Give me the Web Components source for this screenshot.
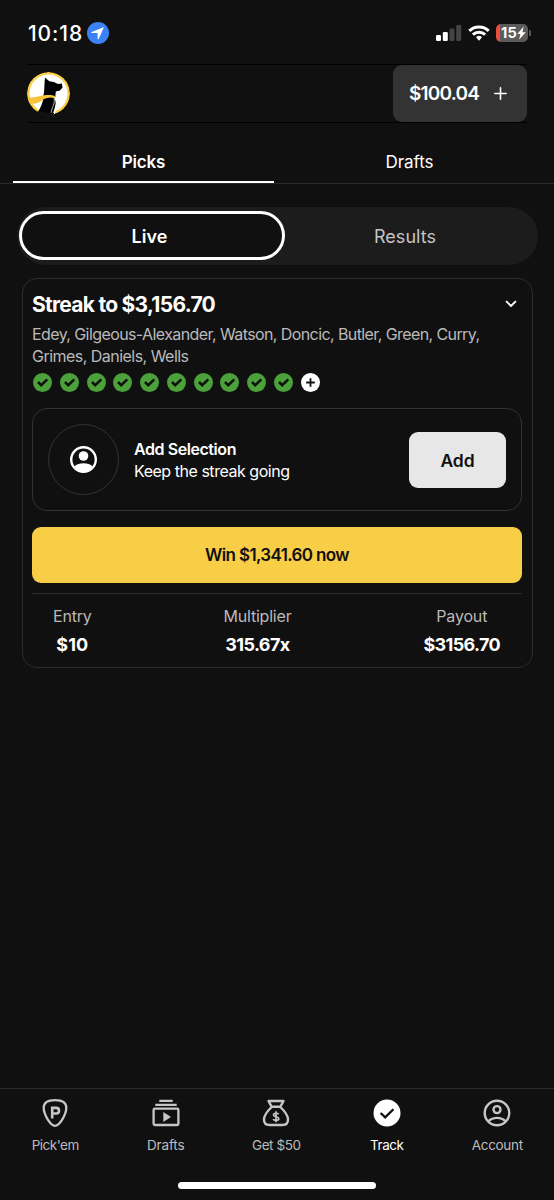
<!DOCTYPE html>
<html lang="en">
<head>
<meta charset="utf-8">
<title>Track picks</title>
<style>
html,body{margin:0;height:100%;background:#101010}
body{font-family:Inter,"Liberation Sans",sans-serif;color:#fff;overflow:hidden}
</style>
</head>
<body>
<track-app></track-app>
<script>
const define=(name,css,html,init)=>{
  const tpl=document.createElement('template');
  tpl.innerHTML=`<style>*{box-sizing:border-box}svg{display:block}${css}</style>${html}`;
  customElements.define(name,class extends HTMLElement{
    connectedCallback(){
      if(this.shadowRoot)return;
      this.attachShadow({mode:'open'}).appendChild(tpl.content.cloneNode(true));
      if(init)init(this,this.shadowRoot);
    }
  });
};

/* The whole screen */
define('track-app',`
:host{display:flex;flex-direction:column;width:554px;height:1200px;background:#101010}
.list{flex:1;padding:13px 21px 0 22px}
`,`
<status-bar></status-bar>
<app-header></app-header>
<tab-bar></tab-bar>
<segment-switch></segment-switch>
<div class="list"><streak-card></streak-card></div>
<bottom-nav></bottom-nav>
`);

define('status-bar',`
:host{display:flex;height:64px;padding:2px 23px 0 28px;align-items:center;justify-content:space-between}
.l,.r{display:flex;align-items:center}
.l{gap:4px}.r{gap:6px}
.bat{display:flex;align-items:center;gap:1px}
.cell{display:flex;align-items:center;justify-content:center;width:32px;height:18px;border-radius:5px;background:linear-gradient(90deg,#eb4e3d 4.5px,#5b5b5b 4.5px);padding-left:3px}
`,`
<div class="l"><ui-text w="55" size="21" weight="500">10:18</ui-text>
<svg width="22" height="22" viewBox="0 0 22 22"><circle cx="11" cy="11" r="11" fill="#3b82f6"/><path d="M16.6 5.2 4.7 10.1c-.6.3-.5 1 .2 1h5.3c.3 0 .4.1.4.4v5.2c0 .8.8.9 1.1.2L16.8 5.5c.1-.2 0-.4-.2-.3Z" fill="#fff"/></svg></div>
<div class="r">
<svg width="26" height="17" viewBox="0 0 26 17"><rect x="0" y="10" width="5" height="6" rx="1.3" fill="#fff"/><rect x="6.8" y="7" width="5" height="9" rx="1.3" fill="#fff"/><rect x="13.5" y="3.5" width="5" height="12.5" rx="1.3" fill="#444"/><rect x="20.2" y="0" width="5" height="16" rx="1.3" fill="#444"/></svg>
<svg width="22" height="16" viewBox="0 0 22 16" fill="none" stroke="#fff" stroke-width="3"><path d="M1.3 5.8a14 14 0 0 1 19.4 0"/><path d="M4.9 9.6a8.8 8.8 0 0 1 12.2 0"/><path d="M8 12.2a4.4 4.4 0 0 1 6 0L11 15.7Z" fill="#fff" stroke="none"/></svg>
<div class="bat"><div class="cell"><ui-text flush w="16" size="14.5" weight="700">15</ui-text><svg width="9" height="14" viewBox="0 0 9 14"><path d="M6.600.6.4 8h3L2.200 13.600 8.800 6.200H5.400Z" fill="#fff"/></svg></div>
<svg width="2" height="6" viewBox="0 0 2 6"><path d="M0 0a3 3 0 0 1 0 6Z" fill="#555"/></svg></div>
</div>
`);

define('app-header',`
:host{display:flex;height:59px;margin:0 27px;border-top:1px solid #000;border-bottom:1px solid #000;align-items:center;justify-content:space-between;box-sizing:border-box}
.bal{display:flex;align-items:center;width:134px;height:57px;background:#333;border-radius:9px;padding:0 20px 0 16px;justify-content:space-between}
`,`
<svg width="43" height="43" viewBox="0 0 43 43">
<defs><clipPath id="c"><circle cx="21.5" cy="21.5" r="21.5"/></clipPath></defs>
<g clip-path="url(#c)">
<circle cx="21.5" cy="21.5" r="21.5" fill="#f8cf46"/><circle cx="21.5" cy="21.5" r="19" fill="#fff"/>
<path d="M9 43C13 37 15.500 32 16.500 26L27.500 24.500C30 28 29 36 26.500 43Z" fill="#000"/>
<path d="M18 5.500 22.300 9.300 26.800 10 31 12.100 34.800 11.400 35.600 15.500 33 18.600 28.800 19.600 28.300 25 16 25C17.800 20 17 15 18 5.500Z" fill="#000"/>
<path d="M1 25.200C7 26.500 12 23.800 17.500 23.200 22 22.800 26 23 28.500 24.600L28 26.500C23 24.600 19.500 25.500 16 27.800 11.500 31.500 6 32.800 2 31Z" fill="#f5c43b"/>
<path d="M28 26C31.500 30 28.500 36 26.500 43" fill="none" stroke="#fff" stroke-width="1.800"/>
<path d="M27 26.500C28.500 31 24.500 36 24 41" fill="none" stroke="#fff" stroke-width=".7"/>
<path d="M9.500 39.500 27 41V43H9Z" fill="#101010"/>
</g></svg>
<div class="bal"><ui-text w="70" size="19" weight="600">$100.04</ui-text>
<svg width="13" height="13" viewBox="0 0 13 13" stroke="#fff" stroke-width="1.600" stroke-linecap="round"><path d="M6.500.8V12.200M.8 6.500H12.200"/></svg></div>
`);

define('tab-bar',`
:host{display:grid;grid-template-columns:261px 261px;gap:5px;height:61px;padding:0 13px;border-bottom:1px solid #2b2b2b;box-sizing:border-box}
div{display:flex;align-items:center;justify-content:center;border-bottom:2.5px solid transparent;padding-top:18px}
.on{border-color:#fff}
`,`
<div class="on"><ui-text w="43.5" size="17" weight="600">Picks</ui-text></div>
<div><ui-text w="48" size="17">Drafts</ui-text></div>
`);

define('segment-switch',`
:host{display:flex;height:58px;margin:23px 16px 0 17px;background:#1c1c1c;border-radius:29px;padding:4px 0 5px 2px;box-sizing:border-box}
div{display:flex;align-items:center;justify-content:center}
.on{width:266px;border:3px solid #fff;border-radius:25px;background:#101010;padding-right:5px}
.off{width:240px;color:#c4c4c4}
`,`
<div class="on"><ui-text w="36" size="18" weight="600">Live</ui-text></div>
<div class="off"><ui-text w="62" size="18">Results</ui-text></div>
`);

define('streak-card',`
:host{display:block;height:390px;border:1px solid #2c2c2c;border-radius:15px;padding:0 10px 0 9px;box-sizing:border-box}
.head{display:flex;justify-content:space-between;align-items:center;height:50px;padding-right:5px}
.desc{display:flex;flex-direction:column;align-items:flex-start;color:#bababa;margin-top:-5px}
.desc ui-text{height:21.500px;line-height:21.500px}
.marks{display:flex;gap:7.770px;padding:6px 0 0 1px}
`,`
<div class="head"><ui-text w="183" size="21" weight="700">Streak to $3,156.70</ui-text>
<svg width="12" height="8" viewBox="0 0 12 8" fill="none" stroke="#fff" stroke-width="1.900" stroke-linecap="round" stroke-linejoin="round"><path d="M1.600 1.600 6 6 10.400 1.600"/></svg></div>
<div class="desc"><ui-text flush w="447.500" size="16">Edey, Gilgeous-Alexander, Watson, Doncic, Butler, Green, Curry,</ui-text><ui-text flush w="156.500" size="16">Grimes, Daniels, Wells</ui-text></div>
<div class="marks"></div>
<add-selection></add-selection>
<win-button></win-button>
<entry-stats></entry-stats>
`,(el,root)=>{
  const marks=root.querySelector('.marks');
  for(let i=0;i<10;i++)marks.appendChild(document.createElement('leg-mark'));
  const p=document.createElement('leg-mark');p.setAttribute('plus','');marks.appendChild(p);
});

define('leg-mark',`
:host{display:block;width:19px;height:19px}
.p{display:none}:host([plus]) .p{display:block}:host([plus]) .k{display:none}
`,`
<svg class="k" width="19" height="19" viewBox="0 0 19 19"><circle cx="9.500" cy="9.500" r="9.500" fill="#4ba13a"/><path d="M5 9 8.200 12.200 14.300 6.300" fill="none" stroke="#101010" stroke-width="2.500"/></svg>
<svg class="p" width="19" height="19" viewBox="0 0 19 19"><circle cx="9.500" cy="9.500" r="9.500" fill="#fff"/><path d="M9.500 5.200V13.800M5.200 9.500H13.800" stroke="#101010" stroke-width="1.800"/></svg>
`);

define('add-selection',`
:host{display:flex;align-items:center;height:103px;margin-top:16px;border:1px solid #333;border-radius:15px;padding:0 15px;box-sizing:border-box}
.ring{width:71px;height:71px;border:1px solid #333;border-radius:50%;display:grid;place-items:center}
.copy{display:flex;flex-direction:column;align-items:flex-start;margin-left:15px;flex:1;padding-top:2px}
.copy ui-text{height:21.500px;line-height:21.500px}
.btn{width:97px;height:56px;border-radius:9px;background:#e7e7e7;color:#101010;display:grid;place-items:center}
`,`
<div class="ring"><svg width="27" height="27" viewBox="0 0 27 27"><circle cx="13.500" cy="13.500" r="12.300" fill="none" stroke="#fff" stroke-width="2.400"/><circle cx="13.500" cy="10" r="4.800" fill="#fff"/><path d="M4.500 20.300C8 16.200 19 16.200 22.500 20.300 18.500 27.200 8.500 27.200 4.500 20.300Z" fill="#fff"/></svg></div>
<div class="copy"><ui-text flush w="102" size="16" weight="600">Add Selection</ui-text><ui-text flush w="155.500" size="16">Keep the streak going</ui-text></div>
<div class="btn"><ui-text w="34" size="17.500" weight="600">Add</ui-text></div>
`);

define('win-button',`
:host{display:grid;place-items:center;height:56px;margin-top:16px;border-radius:9px;background:#f7ce46;color:#101010}
`,`<ui-text flush w="144" size="17" weight="600">Win $1,341.60 now</ui-text>`);

define('entry-stats',`
:host{display:flex;justify-content:space-between;margin-top:10px;border-top:1px solid #2b2b2b;padding:8px 22px 0 21px}
div{display:flex;flex-direction:column;align-items:center}
span{color:#bababa}
ui-text{height:28px;line-height:28px}
div>ui-text{margin-top:1px}
`,`
<div><span><ui-text flush w="38.500" size="16">Entry</ui-text></span><ui-text flush w="32" size="18" weight="700">$10</ui-text></div>
<div><span><ui-text flush w="68" size="16">Multiplier</ui-text></span><ui-text flush w="64.500" size="18" weight="700">315.67x</ui-text></div>
<div><span><ui-text flush w="51" size="16">Payout</ui-text></span><ui-text flush w="76.500" size="18" weight="700">$3156.70</ui-text></div>
`);

define('bottom-nav',`
:host{display:block;height:112px;border-top:1px solid #2b2b2b;box-sizing:border-box}
nav{display:grid;grid-template-columns:repeat(5,1fr);height:93px;padding-right:1.500px;color:#bcbcbc}
.home{width:198px;height:7px;border-radius:4px;background:#fff;margin:0 auto}
`,`
<nav>
<nav-item><svg slot="icon" width="28" height="30" viewBox="0 0 28 30" fill="none" stroke="#c6c6c6" stroke-width="2.300"><path d="M14 2.200C20.500 2.200 25.300 4.600 25.300 9.800 25.300 16.500 18.500 27.800 14 27.800S2.700 16.500 2.700 9.800C2.700 4.600 7.500 2.200 14 2.200Z"/><path d="M11.200 20.500V9.900H15.200a2.700 2.700 0 0 1 0 5.600H11.200" stroke-width="2.600"/></svg><ui-text flush w="47" size="13.500">Pick'em</ui-text></nav-item>
<nav-item><svg slot="icon" width="28" height="30" viewBox="0 0 28 30" fill="none" stroke="#c6c6c6" stroke-width="2.300"><path d="M7.300 2.900H20.700M3.300 6.800H24.700"/><rect x="1.600" y="10.600" width="24.800" height="16.400" rx="1.300"/><path d="M11.300 14V24L19 19Z" fill="#c6c6c6" stroke="none"/></svg><ui-text flush w="37.500" size="13.500">Drafts</ui-text></nav-item>
<nav-item><svg slot="icon" width="28" height="30" viewBox="0 0 28 30" fill="none" stroke="#c6c6c6" stroke-width="2.400" stroke-linejoin="round"><path d="M6.500 3H21.500L18.300 8.800H9.700ZM9.700 9C6 12.500 2 16.500 2 21.500 2 25 4.300 27 7.500 27H20.500C23.700 27 26 25 26 21.500 26 16.500 22 12.500 18.300 9"/><path d="M16.600 16.300C15.600 14.800 11.500 14.800 11.500 17 11.500 19.200 16.800 18.200 16.800 20.700 16.800 22.700 12.300 22.900 11 21.200M14 13.300V24.200" stroke-width="1.700"/></svg><ui-text flush w="48.500" size="13.500">Get $50</ui-text></nav-item>
<nav-item style="color:#fff"><svg slot="icon" width="28" height="30" viewBox="0 0 28 30"><circle cx="14" cy="15" r="13.500" fill="#fff"/><path d="M7.600 15 12.200 19.400 20.400 11.200" fill="none" stroke="#101010" stroke-width="2.300"/></svg><ui-text flush w="33.500" size="13.500">Track</ui-text></nav-item>
<nav-item><svg slot="icon" width="28" height="30" viewBox="0 0 28 30" fill="none" stroke="#c6c6c6" stroke-width="2.400"><circle cx="14" cy="15" r="12.300"/><circle cx="14" cy="11.600" r="3.500"/><path d="M5.500 23.200C10 18.800 18 18.800 22.500 23.200"/></svg><ui-text flush w="51" size="13.500">Account</ui-text></nav-item>
</nav>
<div class="home"></div>
`);

define('nav-item',`
:host{display:flex;flex-direction:column;align-items:center;padding-top:9px;gap:8.500px}
`,`<slot name="icon"></slot><slot></slot>`);

/* Text run whose tracking is adjusted so that it spans the width in "w" */
define('ui-text',`
:host{display:block;width:max-content;white-space:nowrap;line-height:1.200;padding-top:2px}
:host([flush]){padding-top:0}
`,`<slot></slot>`,el=>{
  el.style.fontSize=el.getAttribute('size')+'px';
  el.style.fontWeight=el.getAttribute('weight')||'400';
  const w=+el.getAttribute('w');
  const probe=document.createElement('span');
  const text=el.textContent;
  probe.textContent=text;
  probe.style.cssText=`position:absolute;visibility:hidden;white-space:nowrap;font-size:${el.style.fontSize};font-weight:${el.style.fontWeight}`;
  document.body.appendChild(probe);
  const ls=(w-probe.getBoundingClientRect().width)/text.length;
  probe.remove();
  el.style.letterSpacing=ls.toFixed(3)+'px';
});
</script>
</body>
</html>
